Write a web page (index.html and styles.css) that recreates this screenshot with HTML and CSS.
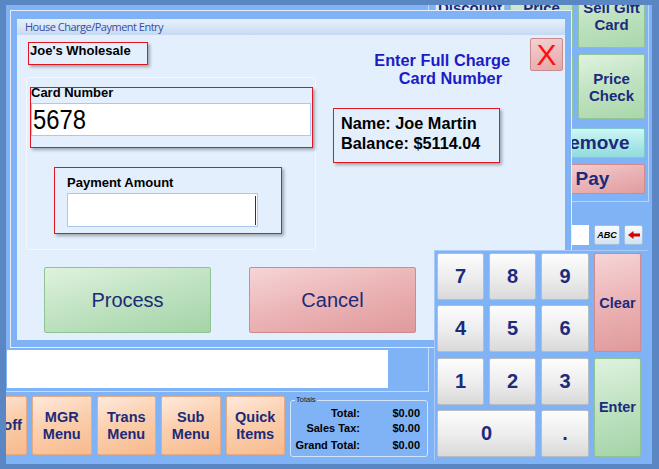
FILE: index.html
```html
<!DOCTYPE html>
<html>
<head>
<meta charset="utf-8">
<link rel="stylesheet" href="styles.css">
</head>
<body>
<div class="screen">
  <div class="app">
    <div class="left">
      <div class="list-panel"><div class="receipt-box"></div></div>
      <div class="bottom-row">
        <div class="bbtn">Log off</div>
        <div class="bbtn">MGR<br>Menu</div>
        <div class="bbtn">Trans<br>Menu</div>
        <div class="bbtn">Sub<br>Menu</div>
        <div class="bbtn">Quick<br>Items</div>
        <fieldset class="totals">
          <legend>Totals</legend>
          <div class="trow"><span>Total:</span><span>$0.00</span></div>
          <div class="trow"><span>Sales Tax:</span><span>$0.00</span></div>
          <div class="trow grand"><span>Grand Total:</span><span>$0.00</span></div>
        </fieldset>
      </div>
    </div>
    <div class="right">
      <div class="btn-panel">
        <div class="top-grid">
          <div class="sbtn light">Discount<br>Item</div>
          <div class="sbtn green">Price<br>Override</div>
          <div class="sbtn green">Sell Gift<br>Card</div>
          <div class="sbtn light"></div>
          <div class="sbtn green"></div>
          <div class="sbtn green">Price<br>Check</div>
        </div>
        <div class="wbtn cyan">Remove</div>
        <div class="wbtn pink pay">Pay</div>
      </div>
      <div class="input-row">
        <div class="textbox"></div>
        <div class="small-btn abc">ABC</div>
        <div class="small-btn arrow">
          <svg width="12" height="8" viewBox="0 0 12 8"><path d="M0 4 L5.5 0 V2.5 H12 V5.5 H5.5 V8 Z" fill="#d40000"/></svg>
        </div>
      </div>
    </div>
  </div>

  <div class="dialog">
    <div class="title">House Charge/Payment Entry</div>
    <div class="dbody">
      <div class="top-section">
        <div class="dleft">
          <div class="redbox company">Joe's Wholesale</div>
          <div class="group">
            <div class="redbox card-box">
              <div class="label">Card Number</div>
              <div class="input card-input"><span class="digits">5678</span></div>
            </div>
            <div class="redbox pay-box">
              <div class="label">Payment Amount</div>
              <div class="input pay-input"><span class="caret"></span></div>
            </div>
          </div>
        </div>
        <div class="dright">
          <div class="header">
            <div class="prompt"><span>Enter Full Charge</span><span class="l2">Card Number</span></div>
            <div class="close">X</div>
          </div>
          <div class="redbox info">
            <div>Name: Joe Martin</div>
            <div>Balance: $5114.04</div>
          </div>
        </div>
      </div>
      <div class="actions">
        <div class="big-btn process">Process</div>
        <div class="big-btn cancel">Cancel</div>
      </div>
    </div>
  </div>

  <div class="numpad">
    <div class="keys">
      <div class="key">7</div>
      <div class="key">8</div>
      <div class="key">9</div>
      <div class="key clear">Clear</div>
      <div class="key">4</div>
      <div class="key">5</div>
      <div class="key">6</div>
      <div class="key">1</div>
      <div class="key">2</div>
      <div class="key">3</div>
      <div class="key enter">Enter</div>
      <div class="key zero">0</div>
      <div class="key dot">.</div>
    </div>
  </div>
</div>
</body>
</html>
```

FILE: styles.css
```css
* { box-sizing: border-box; }
body { margin: 0; font-family: "Liberation Sans", Arial, sans-serif; }

.screen {
  position: relative;
  width: 659px;
  height: 469px;
  background: #5a87c3;
  padding: 5px 7px 5px 6px;
  overflow: hidden;
}
.app {
  width: 100%;
  height: 100%;
  background: #80b3f6;
  display: grid;
  grid-template-columns: 423px 1fr;
  overflow: hidden;
}

/* left column */
.left { display: flex; flex-direction: column; }
.list-panel {
  height: 387px;
  border-right: 1px solid #c4dbf9;
  border-bottom: 1px solid #c4dbf9;
  padding: 0 0 3px 1px;
  display: flex;
  flex-direction: column;
  justify-content: flex-end;
}
.receipt-box { width: 381px; height: 38px; background: #fff; }

.bottom-row {
  display: flex;
  gap: 5px;
  margin-top: 4px;
  margin-left: -38.5px;
}
.bbtn {
  flex: none;
  width: 59.5px;
  height: 59px;
  background: linear-gradient(160deg, #feeade 0%, #fbcfae 45%, #f7ba8d 100%);
  border: 1px solid #e9aa80;
  border-radius: 2px;
  color: #1b2a7a;
  font-weight: bold;
  font-size: 14.5px;
  line-height: 17px;
  display: flex;
  align-items: center;
  justify-content: center;
  text-align: center;
}
.totals {
  flex: none;
  width: 138px;
  height: 61px;
  margin: 0;
  padding: 2px 7px 0 0;
  border: 1px solid #d3e4fb;
  border-radius: 3px;
  min-width: 0;
}
.totals legend {
  font-size: 7.5px;
  line-height: 8px;
  padding: 0 1px;
  margin-left: 4px;
  color: #1a1a1a;
}
.trow {
  display: grid;
  grid-template-columns: 69px 1fr;
  font-size: 11px;
  font-weight: bold;
  line-height: 15px;
  color: #000;
  text-align: right;
}
.trow.grand { margin-top: 2px; }

/* right column */
.btn-panel {
  width: 220px;
  border-right: 1px solid #b9d4f8;
  border-bottom: 1px solid #b9d4f8;
  padding: 0 3px 7px 6px;
}
.top-grid {
  display: grid;
  grid-template-columns: 70px 63px 67px;
  grid-template-rows: 65px 65px;
  gap: 6px 5px;
  margin-top: -22px;
}
.sbtn {
  border-radius: 2px;
  color: #1b2a7a;
  font-weight: bold;
  font-size: 15px;
  line-height: 17px;
  display: flex;
  align-items: center;
  justify-content: center;
  text-align: center;
}
.green {
  background: linear-gradient(165deg, #e0f2e0 0%, #bfe2c0 50%, #a9d7ab 100%);
  border: 1px solid #92c596;
}
.light {
  background: linear-gradient(180deg, #eef3fa, #cfdcec);
  border: 1px solid #a9bfdb;
}
.wbtn {
  width: 105px;
  height: 30px;
  margin-left: 105px;
  margin-top: 9px;
  border-radius: 2px;
  color: #1b2a7a;
  font-weight: bold;
  font-size: 19px;
  line-height: 28px;
  text-align: center;
}
.wbtn.pay { margin-top: 6px; }
.cyan {
  background: linear-gradient(180deg, #cff6f6, #a6e6e6 60%, #93dcdc);
  border: 1px solid #80c9cf;
}
.pink {
  background: linear-gradient(165deg, #f6d6d8 0%, #eab4b6 55%, #e19c9d 100%);
  border: 1px solid #cf8a8c;
}
.input-row {
  display: flex;
  margin: 23px 0 0 8px;
  height: 20px;
}
.textbox { width: 152px; height: 20px; background: #fff; margin-right: 5px; }
.small-btn {
  height: 20px;
  border: 1px solid #a3bfde;
  border-radius: 2px;
  background: linear-gradient(180deg, #fafcfe, #d2e2f2);
  display: flex;
  align-items: center;
  justify-content: center;
}
.abc {
  width: 26px;
  margin-right: 4px;
  font-size: 9px;
  font-weight: bold;
  font-style: italic;
  color: #000;
}
.arrow { width: 19px; }

/* dialog */
.dialog {
  position: absolute;
  left: 10px;
  top: 10px;
  width: 562px;
  height: 338px;
  background: #80b3f6;
  border: 1px solid #e4eefc;
  padding: 8px 6px 7px 6px;
}
.title {
  height: 16px;
  line-height: 16px;
  padding-left: 8px;
  font-family: "Open Sans", sans-serif;
  font-size: 11px;
  letter-spacing: -0.5px;
  color: #3a4d9c;
  background: linear-gradient(180deg, #e7effb 0%, #d8e6f8 50%, #c5d9f3 100%);
}
.dbody {
  height: 305px;
  background: #e3effd;
}
.top-section { display: flex; }
.dleft { width: 290px; margin-left: 9px; }
.redbox {
  border: 1px solid #e2161f;
  box-shadow: 2px 2px 3px rgba(0, 0, 0, 0.3);
}
.company {
  width: 120px;
  height: 23px;
  margin: 7px 0 0 2px;
  padding: 1px 0 0 1px;
  font-size: 13px;
  line-height: 14px;
  font-weight: bold;
  color: #000;
}
.group {
  margin-top: 12px;
  width: 290px;
  height: 173px;
  border: 1px solid #f3f8fe;
  border-radius: 3px;
  padding: 9px 0 0 3px;
}
.label {
  font-size: 13px;
  font-weight: bold;
  color: #000;
}
.card-box {
  width: 283px;
  height: 61px;
}
.card-box .label { line-height: 13px; margin-top: -2px; }
.input {
  background: #fff;
  border: 1px solid #a9c9ef;
}
.card-input {
  width: 280px;
  height: 33px;
  margin-top: 4px;
  padding-left: 1px;
  overflow: hidden;
}
.digits {
  display: inline-block;
  font-size: 28px;
  line-height: 31px;
  color: #000;
  transform: scaleX(0.85);
  transform-origin: left center;
}
.pay-box {
  width: 228px;
  height: 67px;
  margin: 19px 0 0 24px;
  padding: 7px 0 0 12px;
}
.pay-box .label { line-height: 15px; }
.pay-input {
  width: 191px;
  height: 34px;
  margin-top: 3px;
  display: flex;
  justify-content: flex-end;
  align-items: center;
  padding-right: 1px;
}
.caret { width: 1px; height: 29px; background: #333; }

.dright { margin-left: 17px; width: 232px; }
.header { display: flex; justify-content: flex-end; align-items: flex-start; }
.prompt {
  margin-top: 16px;
  display: flex;
  flex-direction: column;
  align-items: flex-end;
  color: #1c1cc6;
  font-weight: bold;
  font-size: 16.3px;
  line-height: 18px;
}
.prompt .l2 { padding-right: 8px; }
.close {
  width: 33px;
  height: 33px;
  margin: 3px 2px 0 20px;
  border: 1px solid #c98a8c;
  border-radius: 2px;
  background: linear-gradient(165deg, #f4d0d2, #e6a7a9);
  color: #ff1010;
  font-size: 30px;
  line-height: 31px;
  text-align: center;
}
.info {
  width: 167px;
  height: 55px;
  margin-top: 21px;
  padding: 4px 0 0 7px;
  font-size: 16.3px;
  font-weight: bold;
  line-height: 20px;
  color: #000;
}
.actions { display: flex; margin-top: 17px; padding-left: 27px; gap: 38px; }
.big-btn {
  width: 167px;
  height: 66px;
  border-radius: 2px;
  font-size: 20px;
  line-height: 64px;
  text-align: center;
  color: #1b2a78;
}
.process {
  background: linear-gradient(165deg, #dff2df 0%, #bfe2c1 50%, #a4d4a7 100%);
  border: 1px solid #8fc492;
}
.cancel {
  background: linear-gradient(165deg, #f6d5d7 0%, #ebb3b5 50%, #e09a9b 100%);
  border: 1px solid #cf8a8c;
}

/* numpad window */
.numpad {
  position: absolute;
  left: 434px;
  top: 250px;
  width: 214px;
  height: 210px;
  background: #80b3f6;
  border-top: 1px solid #aacbf8;
  border-left: 1px solid #aacbf8;
  padding: 2px 0 0 2px;
}
.keys {
  display: grid;
  grid-template-columns: 47px 47px 48px 47px;
  grid-template-rows: repeat(4, 47px);
  column-gap: 5px;
  row-gap: 5.33px;
}
.key {
  border: 1px solid #b8bcc3;
  border-radius: 2px;
  background: linear-gradient(180deg, #fdfdfd 0%, #ececec 55%, #d9d9d9 100%);
  color: #1b2b7e;
  font-weight: bold;
  font-size: 20px;
  display: flex;
  align-items: center;
  justify-content: center;
}
.key.clear {
  grid-column: 4;
  grid-row: 1 / span 2;
  font-size: 14.5px;
  background: linear-gradient(165deg, #f6d5d7 0%, #ebb3b5 50%, #e09a9b 100%);
  border-color: #cf8a8c;
}
.key.enter {
  grid-column: 4;
  grid-row: 3 / span 2;
  font-size: 14.5px;
  background: linear-gradient(165deg, #dff2df 0%, #bfe2c1 50%, #a4d4a7 100%);
  border-color: #8fc492;
}
.key.zero { grid-column: 1 / span 2; }
```
